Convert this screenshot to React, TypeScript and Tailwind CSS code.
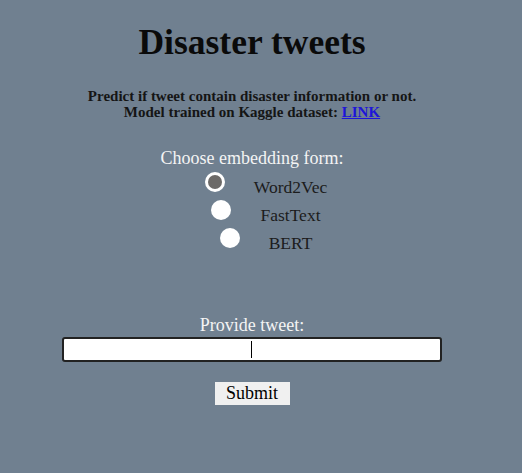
import React, { useState } from "react";

const options = ["Word2Vec", "FastText", "BERT"];

const Radio: React.FC<{ checked: boolean; onClick: () => void }> = ({ checked, onClick }) => (
  <button
    type="button"
    onClick={onClick}
    className="w-[20px] h-[20px] rounded-full bg-white flex items-center justify-center shrink-0"
  >
    {checked && <span className="block w-[14px] h-[14px] rounded-full bg-[#6c6a68]" />}
  </button>
);

export default function App() {
  const [form, setForm] = useState("Word2Vec");
  const [tweet, setTweet] = useState("");

  return (
    <div
      className="h-[473px] w-full bg-[#708090] pr-[18px] flex flex-col items-center"
      style={{ fontFamily: '"Liberation Serif", "Times New Roman", serif' }}
    >
      <h1 className="mt-[22px] text-[35.5px] leading-[40px] font-bold text-[#0a0a0a]">
        Disaster tweets
      </h1>

      <p className="mt-[26px] text-[15px] leading-[16px] font-bold text-[#151515] text-center">
        Predict if tweet contain disaster information or not.
        <br />
        Model trained on Kaggle dataset:{" "}
        <a href="#" className="text-[#1d15d8] underline">
          LINK
        </a>
      </p>

      <div className="mt-[28px] text-[18px] leading-[20px] text-[#f4f4f4]">
        Choose embedding form:
      </div>

      <div className="flex flex-col items-center ml-[28px]">
        {options.map((o) => (
          <label key={o} className="h-[28px] flex items-center gap-[29px] cursor-pointer">
            <Radio checked={form === o} onClick={() => setForm(o)} />
            <span className="pt-[9px] text-[17.5px] leading-[20px] text-[#1c1c1c]">{o}</span>
          </label>
        ))}
      </div>

      <div className="mt-[63px] text-[18px] leading-[20px] text-[#f4f4f4]">Provide tweet:</div>

      <div className="relative mt-[2px]">
        <input
          value={tweet}
          onChange={(e) => setTweet(e.target.value)}
          className="w-[380px] h-[25px] bg-white border-2 border-[#222] rounded-[3px] text-center text-[16px] outline-none"
        />
        {/* text caret */}
        {tweet === "" && (
          <span className="pointer-events-none absolute left-[189px] top-[4px] w-[1px] h-[17px] bg-black" />
        )}
      </div>

      <button
        type="button"
        className="mt-[20px] w-[75px] h-[23px] bg-[#f0f0f0] text-[18px] leading-[23px] text-black"
      >
        Submit
      </button>
    </div>
  );
}
